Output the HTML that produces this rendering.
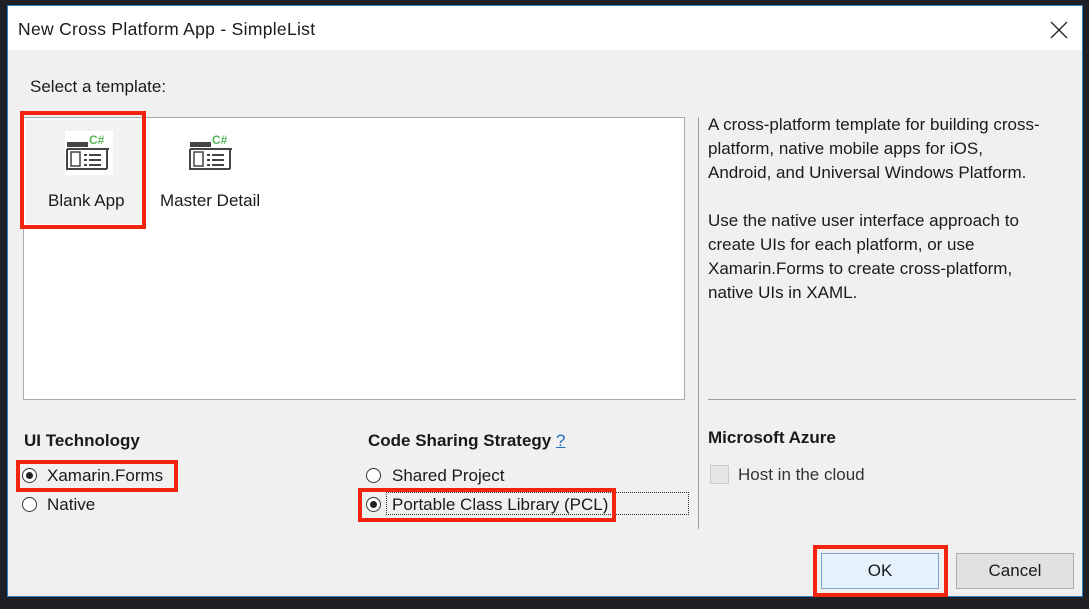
<!DOCTYPE html>
<html><head><meta charset="utf-8"><style>
*{margin:0;padding:0;box-sizing:border-box}
body{width:1089px;height:609px;background:#1f1f26;position:relative;overflow:hidden;font-family:"Liberation Sans",sans-serif;font-size:17px;color:#1a1a1a}
.a{position:absolute;white-space:nowrap}
.dlg{left:7px;top:5px;width:1076px;height:592px;background:#f0f0f0;border:1px solid #2f7dc4}
.title{left:0;top:0;width:1074px;height:44px;background:#fff}
.red{border:4px solid #f0240f}
.radio{width:15px;height:15px;border:1px solid #333;border-radius:50%;background:#fff}
.radio.on::after{content:"";position:absolute;left:3px;top:3px;width:7px;height:7px;border-radius:50%;background:#222}
.btn{background:#e1e1e1;border:1px solid #adadad;text-align:center;line-height:34px}
</style></head><body>
<div class="a dlg">
 <div class="a title"></div>
 <div class="a" style="left:10px;top:13px;font-size:17.5px;letter-spacing:0.3px">New Cross Platform App - SimpleList</div>
 <svg class="a" style="left:1042px;top:15px" width="18" height="18"><path d="M1 1L17 17M17 1L1 17" stroke="#222" stroke-width="1.3"/></svg>
 <div class="a" style="left:22px;top:71px">Select a template:</div>
 <div class="a" style="left:15px;top:111px;width:662px;height:283px;background:#fff;border:1px solid #aaa"></div>
 <div class="a" style="left:18px;top:114px;width:116px;height:104px;background:#f2f2f2"></div>
 <div class="a red" style="left:12px;top:105px;width:126px;height:118px"></div>
 <svg class="a" style="left:57px;top:125px" width="48" height="44"><rect width="48" height="44" fill="#fff"/><rect x="2" y="11" width="21" height="5" fill="#444"/><text x="24" y="13" font-size="12" font-weight="bold" fill="#5bb85b" font-family="Liberation Sans">C#</text><path d="M2 18H44M42 18V38M2 18V38H42" stroke="#444" stroke-width="2" fill="none"/><rect x="6" y="21" width="9" height="14" fill="none" stroke="#444" stroke-width="1.5"/><path d="M19 24h3M24 24h12M19 29h3M24 29h12M19 34h3M24 34h12" stroke="#444" stroke-width="2"/></svg>
 <svg class="a" style="left:180px;top:125px" width="48" height="44"><rect x="2" y="11" width="21" height="5" fill="#444"/><text x="24" y="13" font-size="12" font-weight="bold" fill="#5bb85b" font-family="Liberation Sans">C#</text><path d="M2 18H44M42 18V38M2 18V38H42" stroke="#444" stroke-width="2" fill="none"/><rect x="6" y="21" width="9" height="14" fill="none" stroke="#444" stroke-width="1.5"/><path d="M19 24h3M24 24h12M19 29h3M24 29h12M19 34h3M24 34h12" stroke="#444" stroke-width="2"/></svg>
 <div class="a" style="left:40px;top:185px">Blank App</div>
 <div class="a" style="left:152px;top:185px">Master Detail</div>
 <div class="a" style="left:690px;top:111px;width:1px;height:412px;background:#a0a0a0"></div>
 <div class="a" style="left:700px;top:107px;line-height:24px">A cross-platform template for building cross-<br>platform, native mobile apps for iOS,<br>Android, and Universal Windows Platform.<br><br>Use the native user interface approach to<br>create UIs for each platform, or use<br>Xamarin.Forms to create cross-platform,<br>native UIs in XAML.</div>
 <div class="a" style="left:700px;top:393px;width:368px;height:1px;background:#a0a0a0"></div>
 <div class="a" style="left:700px;top:422px;font-weight:bold">Microsoft Azure</div>
 <div class="a" style="left:702px;top:459px;width:19px;height:19px;background:#e6e6e6;border:1px solid #ccc"></div>
 <div class="a" style="left:730px;top:459px;color:#333">Host in the cloud</div>
 <div class="a" style="left:16px;top:425px;font-weight:bold">UI Technology</div>
 <div class="a radio on" style="left:14px;top:462px"></div>
 <div class="a" style="left:39px;top:460px">Xamarin.Forms</div>
 <div class="a red" style="left:8px;top:454px;width:162px;height:32px"></div>
 <div class="a radio" style="left:14px;top:491px"></div>
 <div class="a" style="left:39px;top:489px">Native</div>
 <div class="a" style="left:360px;top:425px;font-weight:bold">Code Sharing Strategy <span style="color:#1e6fc2;text-decoration:underline;font-weight:normal">?</span></div>
 <div class="a radio" style="left:358px;top:462px"></div>
 <div class="a" style="left:384px;top:460px">Shared Project</div>
 <div class="a" style="left:378px;top:486px;width:303px;height:23px;border:1px dotted #333"></div>
 <div class="a radio on" style="left:358px;top:491px"></div>
 <div class="a" style="left:384px;top:489px">Portable Class Library (PCL)</div>
 <div class="a red" style="left:350px;top:482px;width:258px;height:34px"></div>
 <div class="a btn" style="left:813px;top:547px;width:118px;height:36px;border-color:#7da2ce;background:#e5f1fb">OK</div>
 <div class="a red" style="left:805px;top:539px;width:135px;height:52px"></div>
 <div class="a btn" style="left:948px;top:547px;width:118px;height:36px">Cancel</div>
</div>
</body></html>
